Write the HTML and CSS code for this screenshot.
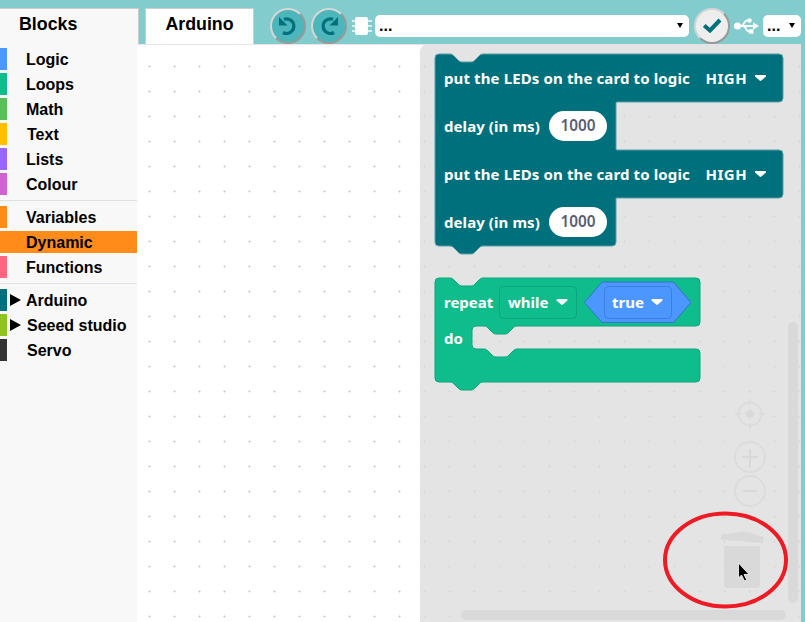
FILE: index.html
```html
<!DOCTYPE html>
<html lang="en">
<head>
  <meta charset="UTF-8">
  <title>Blocks</title>
  <link rel="stylesheet" href="styles.css">
</head>
<body>
  <div class="topbar">
    <div class="tab tab-blocks">Blocks</div>
    <div class="tab tab-arduino">Arduino</div>

    <button class="round-btn undo-btn" type="button">
      <svg class="round-icon" viewBox="2 2 32 32">
        <path class="arc-line" d="M14 11.300A7.300 7.300 0 1 1 13 24.500"/>
        <path class="arc-head" d="M9 9V17.500H17.500Z"/>
      </svg>
    </button>
    <button class="round-btn redo-btn" type="button">
      <svg class="round-icon" viewBox="2 2 32 32">
        <g transform="translate(36 0) scale(-1 1)">
          <path class="arc-line" d="M14 11.300A7.300 7.300 0 1 1 13 24.500"/>
          <path class="arc-head" d="M9 9V17.500H17.500Z"/>
        </g>
      </svg>
    </button>

    <svg class="chip-icon" viewBox="0 0 20 18">
      <rect class="chip-pins" x="0" y="3" width="20" height="2"/>
      <rect class="chip-pins" x="0" y="8" width="20" height="2"/>
      <rect class="chip-pins" x="0" y="13" width="20" height="2"/>
      <rect class="chip-body" x="3" y="0" width="13" height="18" rx="2"/>
    </svg>

    <div class="picker picker-board"><span>...</span><i class="picker-arrow"></i></div>

    <button class="round-btn check-btn" type="button">
      <svg class="round-icon" viewBox="2 2 32 32">
        <path class="check-line" d="M10.200 17.500L16 22.500L26 12"/>
      </svg>
    </button>

    <svg class="usb-icon" viewBox="0 0 25 18">
      <circle class="usb-fill" cx="3.500" cy="9" r="3.500"/>
      <path class="usb-line" d="M3 9H20M7 9C10 9 10 3.500 13 3.500H15M9 9C12 9 12 14.500 15 14.500H17"/>
      <circle class="usb-fill" cx="15.500" cy="3.500" r="2.200"/>
      <rect class="usb-fill" x="15" y="12.300" width="4.400" height="4.400"/>
      <path class="usb-fill" d="M19 5.200L25 9L19 12.800Z"/>
    </svg>

    <div class="picker picker-port"><span>...</span><i class="picker-arrow"></i></div>
  </div>

  <div class="main">
    <nav class="sidebar">
      <ul class="cat-group">
        <li class="cat"><i class="swatch c-logic"></i><span class="cat-name">Logic</span></li>
        <li class="cat"><i class="swatch c-loops"></i><span class="cat-name">Loops</span></li>
        <li class="cat"><i class="swatch c-math"></i><span class="cat-name">Math</span></li>
        <li class="cat"><i class="swatch c-text"></i><span class="cat-name nudge">Text</span></li>
        <li class="cat"><i class="swatch c-lists"></i><span class="cat-name">Lists</span></li>
        <li class="cat"><i class="swatch c-colour"></i><span class="cat-name">Colour</span></li>
      </ul>
      <ul class="cat-group">
        <li class="cat"><i class="swatch c-variables"></i><span class="cat-name">Variables</span></li>
        <li class="cat cat-active"><i class="swatch c-variables"></i><span class="cat-name">Dynamic</span></li>
        <li class="cat"><i class="swatch c-functions"></i><span class="cat-name">Functions</span></li>
      </ul>
      <ul class="cat-group cat-group-last">
        <li class="cat cat-tree"><i class="swatch c-arduino"></i><i class="tree-arrow"></i><span class="cat-name">Arduino</span></li>
        <li class="cat cat-tree"><i class="swatch c-seeed"></i><i class="tree-arrow"></i><span class="cat-name nudge">Seeed studio</span></li>
        <li class="cat"><i class="swatch c-servo"></i><span class="cat-name nudge">Servo</span></li>
      </ul>
    </nav>

    <!-- workspace canvas, coordinates are the page's own -->
    <svg class="workspace" viewBox="137 44 664 578">
      <defs>
        <pattern id="gridWhite" patternUnits="userSpaceOnUse" x="137" y="54" width="25" height="25">
          <rect class="dot-arm" x="11" y="12" width="3" height="1"/>
          <rect class="dot-arm" x="12" y="11" width="1" height="3"/>
          <rect class="dot-mid" x="12" y="12" width="1" height="1"/>
        </pattern>
        <pattern id="gridGrey" patternUnits="userSpaceOnUse" x="137" y="54" width="25" height="25">
          <rect class="dot-arm-grey" x="11" y="12" width="3" height="1"/>
          <rect class="dot-arm-grey" x="12" y="11" width="1" height="3"/>
        </pattern>
        <path id="arrow" d="M1 0H10C11 0 11.400 1 10.700 1.700L6.400 5.600C5.900 6.100 5.100 6.100 4.600 5.600L.3 1.700C-.4 1 0 0 1 0Z"/>
      </defs>

      <rect class="ws-white" x="137" y="44" width="664" height="578"/>
      <rect fill="url(#gridWhite)" x="137" y="45" width="664" height="577"/>
      <rect class="ws-line" x="137" y="44" width="664" height="1"/>

      <path class="flyout" d="M420 52a8 8 0 0 1 8-8H801V622H420Z"/>
      <path fill="url(#gridGrey)" d="M420 52a8 8 0 0 1 8-8H801V622H420Z"/>

      <!-- LED / delay stack -->
      <path class="blk-teal" d="M435 58a4 4 0 0 1 4-4H450c2 0 3 1 4 2l4 4c1 1 2 2 4 2h9c2 0 3-1 4-2l4-4c1-1 2-2 4-2H779a4 4 0 0 1 4 4V98a4 4 0 0 1-4 4H617q-1 0-1 1V149q0 1 1 1H779a4 4 0 0 1 4 4V194a4 4 0 0 1-4 4H616V242a4 4 0 0 1-4 4H483c-2 0-3 1-4 2l-4 4c-1 1-2 2-4 2h-9c-2 0-3-1-4-2l-4-4c-1-1-2-2-4-2H439a4 4 0 0 1-4-4Z"/>

      <text class="blk-text blk-long" x="444" y="84">put the LEDs on the card to logic</text>
      <text class="blk-text blk-high" x="705.500" y="84">HIGH</text>
      <use class="blk-arrow" href="#arrow" x="755" y="75"/>

      <text class="blk-text blk-delay" x="444" y="132">delay (in ms)</text>
      <rect class="num-pill" x="549" y="111" width="58" height="30" rx="15"/>
      <text class="num-text" x="578" y="131">1000</text>

      <text class="blk-text blk-long" x="444" y="180">put the LEDs on the card to logic</text>
      <text class="blk-text blk-high" x="705.500" y="180">HIGH</text>
      <use class="blk-arrow" href="#arrow" x="755" y="171"/>

      <text class="blk-text blk-delay" x="444" y="228">delay (in ms)</text>
      <rect class="num-pill" x="549" y="207" width="58" height="30" rx="15"/>
      <text class="num-text" x="578" y="227">1000</text>

      <!-- repeat while -->
      <path class="blk-green" d="M435 282a4 4 0 0 1 4-4H450c2 0 3 1 4 2l4 4c1 1 2 2 4 2h9c2 0 3-1 4-2l4-4c1-1 2-2 4-2H696a4 4 0 0 1 4 4V322a4 4 0 0 1-4 4H517c-2 0-3 1-4 2l-4 4c-1 1-2 2-4 2h-9c-2 0-3-1-4-2l-4-4c-1-1-2-2-4-2H476a4 4 0 0 0-4 4V345a4 4 0 0 0 4 4H484c2 0 3 1 4 2l4 4c1 1 2 2 4 2h9c2 0 3-1 4-2l4-4c1-1 2-2 4-2H696a4 4 0 0 1 4 4V378a4 4 0 0 1-4 4H483c-2 0-3 1-4 2l-4 4c-1 1-2 2-4 2h-9c-2 0-3-1-4-2l-4-4c-1-1-2-2-4-2H439a4 4 0 0 1-4-4Z"/>
      <text class="blk-text" x="444" y="308">repeat</text>
      <rect class="drop-green" x="499.500" y="286.500" width="77" height="32" rx="4"/>
      <text class="blk-text" x="508" y="308">while</text>
      <use class="blk-arrow" href="#arrow" x="556.500" y="299"/>

      <path class="hex-blue" d="M584.500 302.500L602 282H673.500L691 302.500L673.500 322.500H602Z"/>
      <rect class="drop-blue" x="604.500" y="286.500" width="67" height="32" rx="4"/>
      <text class="blk-text" x="612" y="308">true</text>
      <use class="blk-arrow" href="#arrow" x="651.500" y="299"/>

      <text class="blk-text" x="444" y="344">do</text>

      <!-- scrollbars -->
      <rect class="scroll" x="788" y="322" width="10" height="281" rx="5"/>
      <rect class="scroll" x="461" y="610" width="325" height="10" rx="5"/>

      <!-- zoom controls -->
      <circle class="ctl-ring" cx="750" cy="414" r="11.500"/>
      <path class="ctl-ring" d="M750 399V405M750 423V429M735 414H741M759 414H765"/>
      <circle class="ctl-fill" cx="750" cy="414" r="4"/>
      <circle class="ctl-ring" cx="750" cy="457" r="15"/>
      <path class="ctl-mark" d="M750 449V465M742 457H758"/>
      <circle class="ctl-ring" cx="750" cy="491" r="15"/>
      <path class="ctl-mark" d="M743 491H757"/>

      <!-- trash -->
      <path class="ctl-fill" d="M721 534.500L733 533.500Q741 530 751 533L763.500 537L763 543L721 539.500Z"/>
      <path class="ctl-fill" d="M724 546H760V584a4 4 0 0 1-4 4H728a4 4 0 0 1-4-4Z"/>

      <ellipse class="red-ring" cx="725.500" cy="560" rx="60.500" ry="46.500"/>
      <path class="cursor" d="M738.500 563V578L741.500 575L744.500 581L746.800 580L744 574.500H749Z"/>
    </svg>
  </div>
</body>
</html>
```

FILE: styles.css
```css
/* styles.css */
body {
    margin: 0;
    height: 622px;
    overflow: hidden;
    background-color: #82ccce;
    font-family: "Liberation Sans", Arial, sans-serif;
    font-weight: bold;
    font-size: 16px;
    color: #000;
}

/* top bar */
.topbar {
    display: flex;
    align-items: center;
    height: 36px;
    padding-top: 8px;
}

.tab {
    box-sizing: border-box;
    height: 36px;
    line-height: 31px;
    font-size: 17.8px;
    border: 1px solid #ccc;
    border-bottom: none;
}

.tab-blocks {
    width: 139px;
    padding-left: 19px;
    background-color: #f8f8f8;
    border-left: none;
}

.tab-arduino {
    width: 109px;
    margin-left: 6px;
    text-align: center;
    background-color: #fff;
}

.round-btn {
    box-sizing: border-box;
    width: 36px;
    height: 36px;
    padding: 0;
    background-color: #4db6ba;
    border: 2px solid;
    border-color: #d6d6d6 #999 #999 #d6d6d6;
    border-radius: 50%;
}

.round-icon {
    display: block;
    width: 32px;
    height: 32px;
}

.undo-btn {
    margin-left: 16px;
}

.redo-btn {
    margin-left: 5px;
}

.check-btn {
    margin-left: 5px;
    background-color: #eee;
}

.arc-line {
    fill: none;
    stroke: #00707c;
    stroke-width: 3.2;
}

.arc-head {
    fill: #00707c;
}

.check-line {
    fill: none;
    stroke: #00707c;
    stroke-width: 4;
}

.chip-icon {
    width: 20px;
    height: 18px;
    margin-left: 5px;
}

.chip-body {
    fill: #fff;
}

.chip-pins {
    fill: #d8f0f0;
}

.picker {
    box-sizing: border-box;
    display: flex;
    justify-content: space-between;
    height: 22px;
    line-height: 22px;
    padding-left: 4px;
    background-color: #fff;
    border-radius: 5px;
}

.picker-board {
    width: 314px;
    margin-left: 3px;
    padding-right: 6px;
}

.picker-port {
    width: 38px;
    margin-left: 4px;
    padding-right: 6px;
}

.picker-arrow {
    width: 0;
    height: 0;
    margin-top: 8px;
    border-top: 5px solid #000;
    border-left: 3px solid transparent;
    border-right: 3px solid transparent;
}

.usb-icon {
    width: 25px;
    height: 18px;
    margin-left: 4px;
}

.usb-fill {
    fill: #fff;
}

.usb-line {
    fill: none;
    stroke: #fff;
    stroke-width: 1.8;
}

/* sidebar + canvas */
.main {
    display: flex;
    height: 578px;
}

.sidebar {
    flex: none;
    box-sizing: border-box;
    width: 137px;
    padding-top: 4px;
    background-color: #f8f8f8;
}

.cat-group {
    display: flex;
    flex-direction: column;
    gap: 3px;
    margin: 0 0 5px;
    padding: 0 0 5px;
    list-style: none;
    border-bottom: 1px solid #e0e0e0;
}

.cat-group-last {
    border-bottom: none;
}

.cat {
    display: flex;
    align-items: center;
    height: 22px;
}

.cat-active {
    background-color: #ff8c1a;
}

.swatch {
    flex: none;
    width: 7px;
    height: 22px;
    margin-right: 19px;
}

.cat-tree .swatch {
    margin-right: 3px;
}

.tree-arrow {
    flex: none;
    width: 0;
    height: 0;
    margin-right: 5px;
    border-left: 11px solid #000;
    border-top: 6px solid transparent;
    border-bottom: 6px solid transparent;
}

.cat-name {
    padding-top: 2px;
}

.cat-name.nudge {
    margin-left: 1px;
}

.c-logic { background-color: #4c97ff; }
.c-loops { background-color: #0fbd8c; }
.c-math { background-color: #59c059; }
.c-text { background-color: #ffbf00; }
.c-lists { background-color: #9966ff; }
.c-colour { background-color: #cf63cf; }
.c-variables { background-color: #ff8c1a; }
.c-functions { background-color: #ff6680; }
.c-arduino { background-color: #00707c; }
.c-seeed { background-color: #8fc31f; }
.c-servo { background-color: #333; }

.workspace {
    display: block;
    width: 664px;
    height: 578px;
}

.ws-white { fill: #fff; }
.ws-line { fill: #e6e6e6; }
.dot-arm { fill: #e0e0e0; }
.dot-mid { fill: #c8c8c8; }
.dot-arm-grey { fill: #dadada; }
.flyout { fill: #e4e4e4; }

/* blocks */
.blk-teal {
    fill: #00707c;
    stroke: #5a9fa8;
    stroke-width: 1;
}

.blk-green {
    fill: #0fbd8c;
    stroke: #0da57a;
    stroke-width: 1;
}

.blk-text {
    font-family: "Noto Sans", sans-serif;
    font-size: 15px;
    font-weight: bold;
    fill: #fff;
}

.blk-long {
    letter-spacing: 0.12px;
}

.blk-high {
    letter-spacing: 0.5px;
}

.blk-delay {
    letter-spacing: 0.08px;
}

.blk-arrow {
    fill: #fff;
}

.num-pill {
    fill: #fff;
}

.num-text {
    font-family: "Noto Sans", sans-serif;
    font-size: 15.3px;
    font-weight: 600;
    fill: #575e75;
    text-anchor: middle;
}

.drop-green {
    fill: #0fbd8c;
    stroke: #0da57a;
    stroke-width: 1;
}

.hex-blue {
    fill: #4c97ff;
    stroke: #3373cc;
    stroke-width: 1;
}

.drop-blue {
    fill: #4c97ff;
    stroke: #3d7fdb;
    stroke-width: 1;
}

/* controls */
.scroll { fill: #d9d9d9; }

.ctl-ring {
    fill: none;
    stroke: #dcdcdc;
    stroke-width: 2;
}

.ctl-mark {
    fill: none;
    stroke: #d8d8d8;
    stroke-width: 2;
}

.ctl-fill { fill: #d9d9d9; }

.red-ring {
    fill: none;
    stroke: #ed1c24;
    stroke-width: 4;
}

.cursor {
    fill: #000;
    stroke: #fff;
    stroke-width: 0.8;
}
```
